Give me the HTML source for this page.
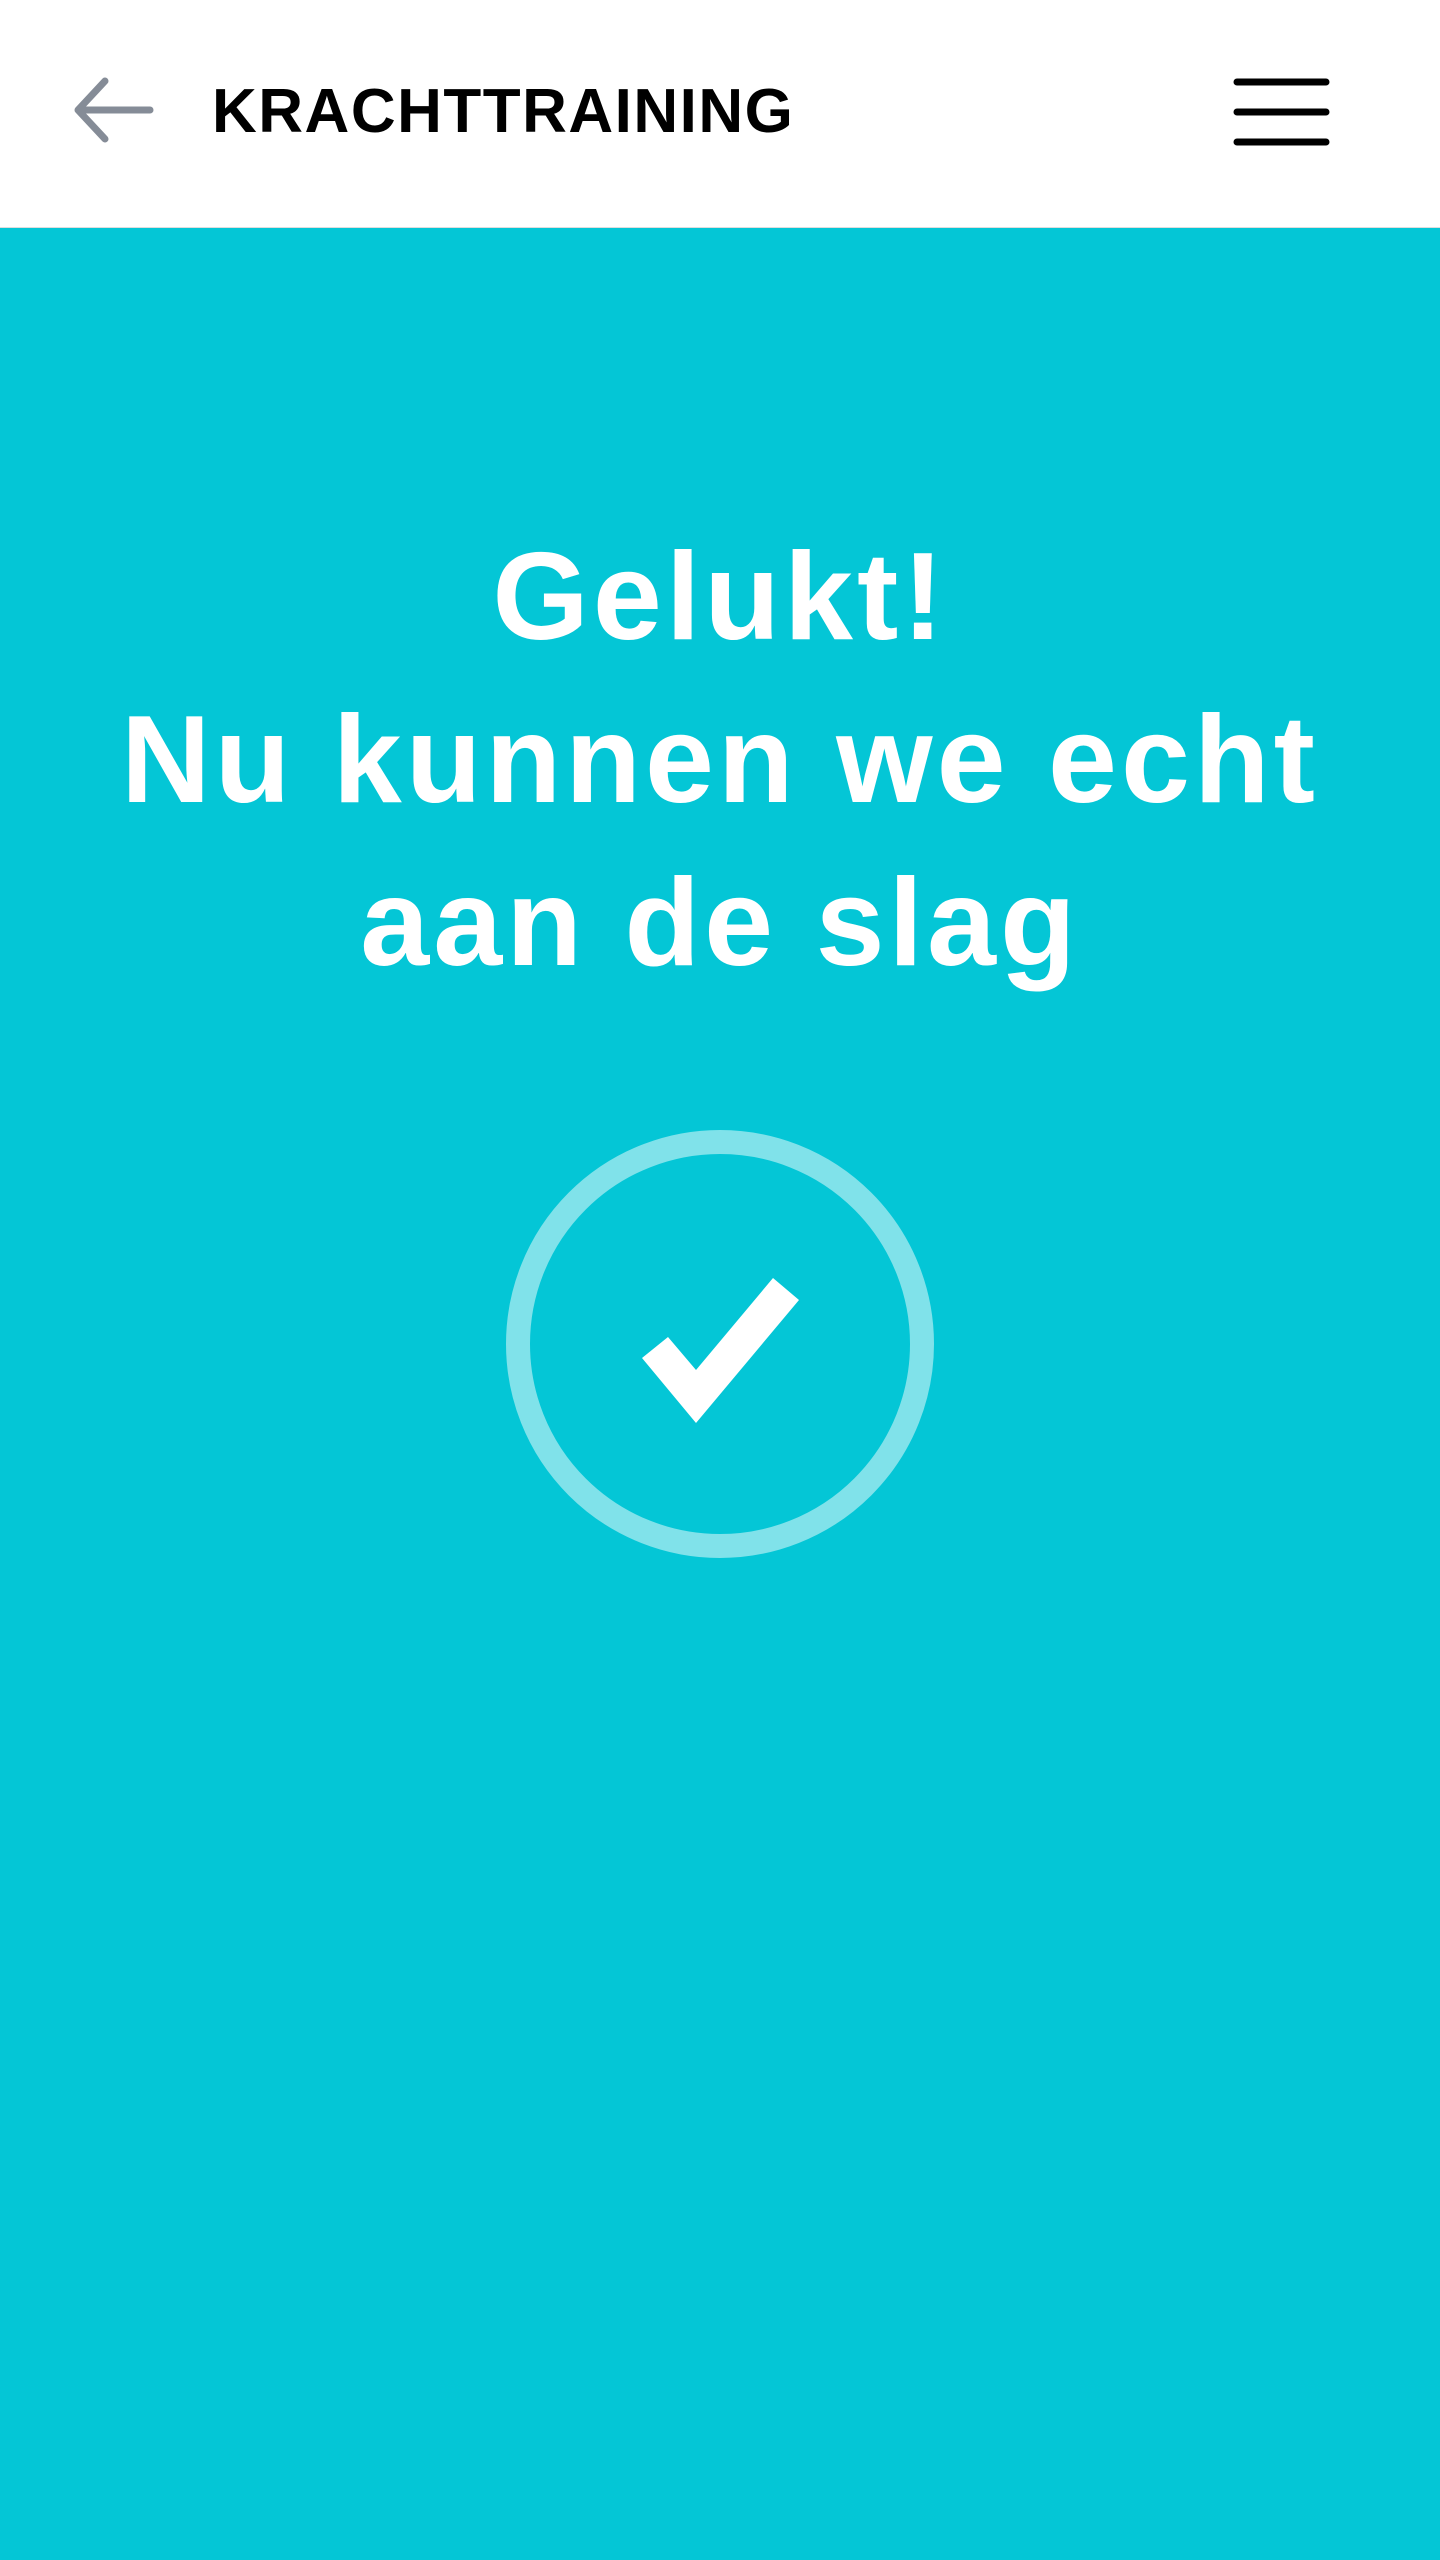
<!DOCTYPE html>
<html><head><meta charset="utf-8"><style>
html,body{margin:0;padding:0;width:1440px;height:2560px;background:#04C6D6;overflow:hidden}
.hdr{position:absolute;left:0;top:0;width:1440px;height:228px;background:#fff;border-bottom:1px solid #ddd;box-sizing:border-box}
.title{position:absolute;left:212px;top:77px;font:bold 62px/70px "Liberation Sans",sans-serif;letter-spacing:1.5px;color:#000;white-space:nowrap}
.h{position:absolute;left:0;width:1440px;top:516px;text-align:center;color:#fff;font:bold 124px/163px "Liberation Sans",sans-serif;letter-spacing:4px;white-space:nowrap}
</style></head><body>
<div class="hdr">
<svg style="position:absolute;left:70px;top:75px" width="90" height="70" viewBox="70 75 90 70"><path d="M105 81 L78 110 L105 139 M78 110 H150" stroke="#858C97" stroke-width="7" fill="none" stroke-linecap="round" stroke-linejoin="round"/></svg>
<div class="title">KRACHTTRAINING</div>
<svg style="position:absolute;left:1230px;top:75px" width="105" height="75" viewBox="1230 75 105 75"><path d="M1237 82H1326M1237 112H1326M1237 142H1326" stroke="#000" stroke-width="7" stroke-linecap="round"/></svg>
</div>
<div class="h">Gelukt!<br>Nu kunnen we echt<br>aan de slag</div>
<svg style="position:absolute;left:0;top:0" width="1440" height="2560">
<circle cx="720" cy="1344" r="202" fill="none" stroke="#80E2EA" stroke-width="24"/>
<polygon points="642,1358 668,1337 696,1370 773,1278 799,1300 696,1423" fill="#fff"/>
</svg>
</body></html>
